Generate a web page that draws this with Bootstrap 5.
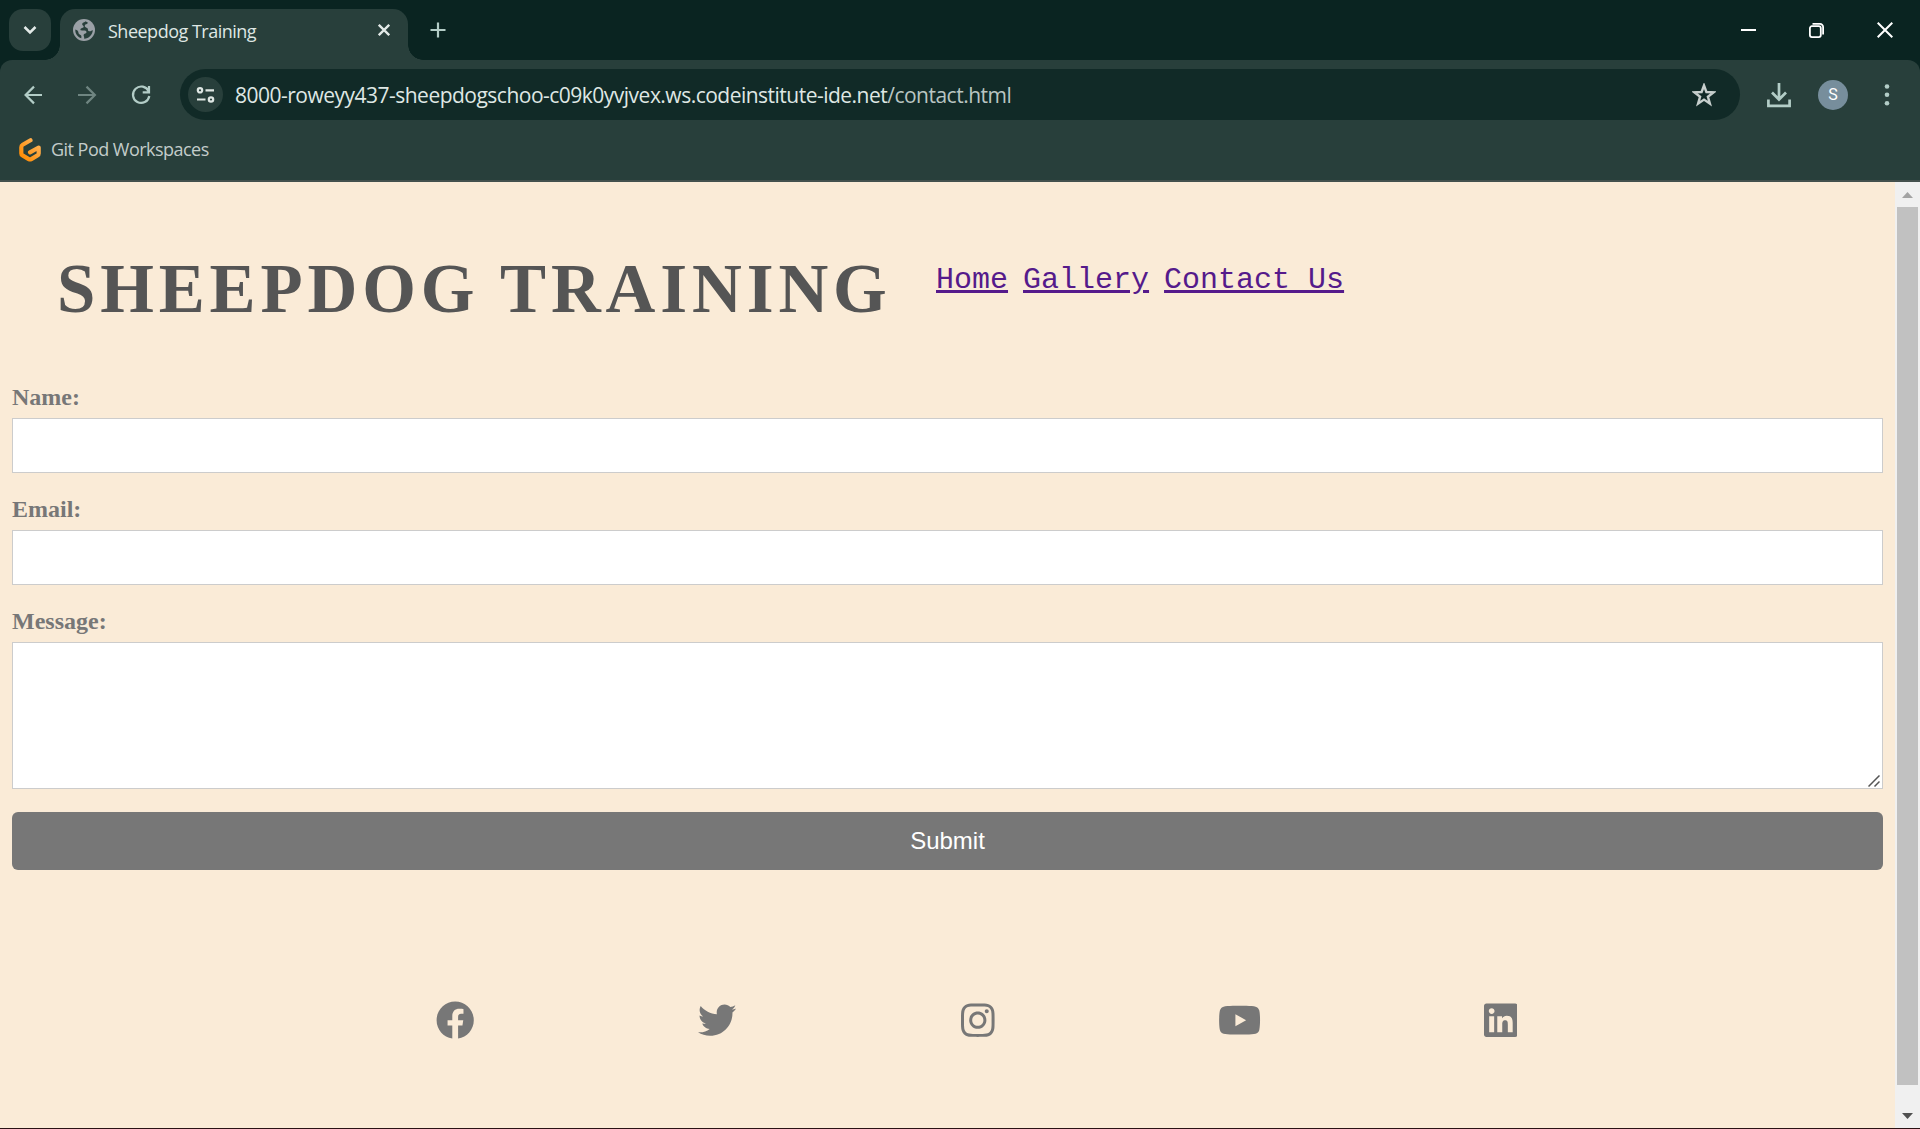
<!DOCTYPE html>
<html lang="en">
<head>
<meta charset="utf-8">
<meta name="viewport" content="width=device-width, initial-scale=1">
<title>Sheepdog Training</title>
<link href="https://cdn.jsdelivr.net/npm/bootstrap@5.3.0/dist/css/bootstrap.min.css" rel="stylesheet">
<style>
  body { height: 1129px; overflow: hidden; background: #faebd7; font-family: "Open Sans", "Noto Sans", sans-serif; }
  svg { display: block; flex: none; }
  .tabstrip { height: 60px; background: #0a2421; padding: 9px 27px 0 9px; }
  .tab-search { width: 42px; height: 42px; border-radius: 14px; background: #283f3b; }
  .browser-tab { position: relative; width: 348px; height: 51px; margin-left: 9px; padding: 0 18px 9px 13px; border-radius: 15px 15px 0 0; background: #283f3b; color: #dfe7e4; font-size: 18px; }
  .browser-tab::before, .browser-tab::after { content: ""; position: absolute; bottom: 0; width: 15px; height: 15px; }
  .browser-tab::before { left: -15px; background: radial-gradient(circle at 0 0, transparent 14.5px, #283f3b 15px); }
  .browser-tab::after { right: -15px; background: radial-gradient(circle at 100% 0, transparent 14.5px, #283f3b 15px); }
  .tab-title { margin-left: 13px; padding-top: 2px; line-height: 40px; letter-spacing: -.5px; white-space: nowrap; }
  .strip-icon { height: 42px; }
  .new-tab { margin-left: 22px; }
  .window-controls { gap: 53px; }
  .toolbar-wrap { background: #0a2421; }
  .toolbar { height: 122px; background: #283f3b; border-radius: 12px 12px 0 0; }
  .nav-row { padding: 9px 22px 0 22px; height: 60px; }
  .omnibox { width: 1560px; height: 51px; margin-left: 27px; padding: 0 24px 0 8px; border-radius: 26px; background: #112a27; color: #dfe7e4; font-size: 21px; }
  .site-info { width: 35px; height: 35px; background: #283f3b; }
  .url-text { margin-left: 12px; white-space: nowrap; letter-spacing: -.51px; line-height: 30px; }
  .url-path { color: #b9c5c2; }
  .downloads, .avatar { margin-left: 27px; }
  .kebab { margin-left: 36px; }
  .avatar { width: 30px; height: 30px; background: #778e9c; color: #fff; font: 16px/30px Roboto, sans-serif; }
  .bookmarks { height: 62px; padding: 0 0 0 19px; border-bottom: 2px solid #43504d; color: #c3ccca; font-size: 18px; }
  .bookmarks span { letter-spacing: -.53px; margin: 0 0 1px 10px; }
  .viewport { height: 946px; }
  .site-head { height: 193px; padding-left: 57px; }
  .site-title { margin: 63px 0 0; width: 879px; color: #555; font: 700 69px/88px "Liberation Serif", serif; letter-spacing: 4.85px; white-space: nowrap; }
  .site-nav { gap: 15px; margin-top: 80px; font: 30px/36px "Liberation Mono", monospace; }
  .site-nav a { color: #551a8b; text-decoration: underline 3px; white-space: nowrap; text-underline-offset: 2px; }
  .contact-form { padding: 0 12px; }
  .contact-form .form-label { display: block; height: 43px; margin: 0; padding-top: 9px; font: 700 24px/27px "Liberation Serif", serif; color: #777; }
  .contact-form .form-control { border: 1px solid #ccc; border-radius: 0; background: #fff; resize: none; }
  .contact-form input.form-control { height: 55px; margin-bottom: 14px; }
  .contact-form textarea.form-control { height: 147px; }
  .grip { position: absolute; right: 3px; bottom: 2px; }
  .submit-btn, .submit-btn:hover { height: 58px; margin-top: 23px; border: 0; border-radius: 6px; background: #777; color: #fff; font: 24px/56px "Liberation Sans", sans-serif; padding: 0; }
  .social { width: 1306px; margin: 131px 0 0 325px; }
  .social svg { height: 38.4px; fill: #777; }
  .scroll-track { width: 25px; background: #f0f0f0; }
  .scroll-thumb { width: 21px; height: 878px; background: #c1c1c1; margin-left: 2px; }
  .bottom-edge { height: 1px; background: #2a1214; }
</style>
</head>
<body class="d-flex flex-column">
<header>
  <div class="tabstrip d-flex align-items-start">
    <div class="tab-search d-flex align-items-center justify-content-center">
      <svg width="14" height="10" viewBox="0 0 14 10" fill="none" stroke="#e3eae8" stroke-width="2.5"><path d="M1.5 2 7 7.5 12.500 2"/></svg>
    </div>
    <div class="browser-tab d-flex align-items-center">
      <svg width="22" height="22" viewBox="0 0 22 22"><circle cx="11" cy="11" r="11" fill="#9aa0a6"/><path d="M12.500 2.200c-.8 1.500-3.300 1-3.300 3 0 1.300 1.500 1.300 1.500 2.500 0 1.500-3 1-3.300 2.700-.1 1.300 2.300.8 4.100 1 2 .2 2.400 1.700 1.600 2.700-.8.900-2.300.5-2.500 2-.1 1.200.8 1.800.6 3.600 4.600-.1 8.500-4 8.600-8.700-1.200.5-2.100 1.700-3.700 1.200-1.800-.6-.5-2.600-2.100-3.300-1.300-.6-2.500-1.100-2.200-2.500.3-1.500 2.400-.9 3.200-2.600-.8-.7-1.600-1.200-2.500-1.600zM2.300 10.500c-.3 4 2.300 7.700 6 8.800.2-1.600.3-2.300-.4-3.100-.9-1-2.500-1.200-2.500-2.800 0-1.500-1.300-2.400-3.100-2.900z" fill="#283f3b"/></svg>
      <span class="tab-title">Sheepdog Training</span>
      <svg class="ms-auto" width="12" height="12" viewBox="0 0 12 12" stroke="#e3eae8" stroke-width="2.300"><path d="m.8.8 10.400 10.400M11.200.8.8 11.200"/></svg>
    </div>
    <div class="strip-icon new-tab d-flex align-items-center"><svg width="16" height="16" viewBox="0 0 16 16" stroke="#b3cdc7" stroke-width="2.200"><path d="M8 .5v15M.5 8h15"/></svg></div>
    <div class="strip-icon window-controls d-flex align-items-center ms-auto">
      <svg width="15" height="15" viewBox="0 0 15 15"><path d="M0 6h15v2H0z" fill="#fff"/></svg>
      <svg width="15" height="15" viewBox="0 0 15 15" fill="none" stroke="#fff" stroke-width="1.800"><rect x=".9" y="3.200" width="10.900" height="10.900" rx="2"/><path d="M3.500.9H11a3.100 3.100 0 0 1 3.100 3.100v7.500"/></svg>
      <svg width="16" height="16" viewBox="0 0 16 16" stroke="#fff" stroke-width="2"><path d="m.7.700 14.600 14.600M15.300.700.700 15.300"/></svg>
    </div>
  </div>
  <div class="toolbar-wrap">
    <div class="toolbar">
      <div class="nav-row d-flex align-items-center">
        <svg width="131" height="24" viewBox="0 0 131 24" fill="none" stroke-width="2.200">
          <path d="M20 12H4M12 3.600 3.600 12 12 20.400" stroke="#b3cdc7"/>
          <path d="M56 12h16M64.500 3.600 72.900 12l-8.400 8.400" stroke="#6f8581"/>
          <path d="M126.700 8.400A8.200 8.200 0 1 0 127.300 13M127 3v6.300h-6.300" stroke="#b3cdc7"/>
        </svg>
        <div class="omnibox d-flex align-items-center">
          <span class="site-info rounded-circle d-flex align-items-center justify-content-center">
            <svg width="19" height="16" viewBox="0 0 19 16" fill="none" stroke="#dfe7e4" stroke-width="2.200"><circle cx="4" cy="3.300" r="2.200"/><path d="M9.500 3.300H18M1 12.500h8.500"/><circle cx="15" cy="12.500" r="2.200"/></svg>
          </span>
          <span class="url-text">8000-roweyy437-sheepdogschoo-c09k0yvjvex.ws.codeinstitute-ide.net<span class="url-path">/contact.html</span></span>
          <svg class="ms-auto" width="24" height="24" viewBox="0 0 24 24" fill="none" stroke="#c7cfcd" stroke-width="2.400"><path d="m12 2.500 2.400 6.500 7.300.3-5.800 4.400 2 7-5.900-4.100-5.900 4.100 2-7-5.800-4.400 7.300-.3z"/></svg>
        </div>
        <svg class="downloads" width="24" height="26" viewBox="0 0 24 26" fill="none" stroke="#b3cdc7" stroke-width="2.700"><path d="M12 1v16M5 10.500l7 7 7-7M1.400 17.500v6.300h21.200v-6.300"/></svg>
        <div class="avatar rounded-circle text-center">S</div>
        <svg class="kebab" width="6" height="22" viewBox="0 0 6 22" fill="#b3cdc7"><circle cx="3" cy="2.500" r="2.300"/><circle cx="3" cy="10.800" r="2.300"/><circle cx="3" cy="19.200" r="2.300"/></svg>
      </div>
      <div class="bookmarks d-flex align-items-center">
        <svg width="22" height="24" viewBox="0 0 22 24" fill="none"><defs><linearGradient id="gp" x1="1" y1="0" x2="0" y2="1"><stop stop-color="#ffb45b"/><stop offset="1" stop-color="#ff8a00"/></linearGradient></defs><path d="M11.500 2.300 3.700 6.800Q2.300 7.600 2.300 9.200v6.200q0 1.300 1.200 2l6.200 3.700q1.300.7 2.600 0l6.200-3.700q1.200-.7 1.200-2V9.500L11 14.300" stroke="url(#gp)" stroke-width="4.200" stroke-linecap="round" stroke-linejoin="round"/></svg>
        <span>Git Pod Workspaces</span>
      </div>
    </div>
  </div>
</header>
<main class="viewport d-flex">
  <div class="flex-grow-1">
    <div class="site-head d-flex align-items-start">
      <h1 class="site-title">SHEEPDOG TRAINING</h1>
      <nav class="site-nav d-flex"><a href="#">Home</a><a href="#">Gallery</a><a href="#">Contact Us</a></nav>
    </div>
    <form class="contact-form">
      <label class="form-label" for="name">Name:</label>
      <input class="form-control" id="name" type="text">
      <label class="form-label" for="email">Email:</label>
      <input class="form-control" id="email" type="email">
      <label class="form-label" for="message">Message:</label>
      <div class="position-relative">
        <textarea class="form-control" id="message"></textarea>
        <svg class="grip" width="12" height="12" viewBox="0 0 12 12" stroke="#555" stroke-width="1.500"><path d="M.5 11.500 11.500.500M6.500 11.500l5-5"/></svg>
      </div>
      <button class="btn submit-btn w-100 d-block" type="button">Submit</button>
    </form>
    <div class="social row g-0 row-cols-5">
      <div class="col d-flex justify-content-center"><svg viewBox="0 0 512 512"><path d="M504 256C504 119 393 8 256 8S8 119 8 256c0 123.780 90.690 226.380 209.250 245V327.690h-63V256h63v-54.640c0-62.150 37-96.480 93.670-96.480 27.140 0 55.520 4.840 55.520 4.840v61h-31.280c-30.800 0-40.410 19.120-40.410 38.730V256h68.780l-11 71.690h-57.780V501C413.310 482.380 504 379.780 504 256z"/></svg></div>
      <div class="col d-flex justify-content-center"><svg viewBox="0 0 512 512"><path d="M459.370 151.716c.325 4.548.325 9.097.325 13.645 0 138.720-105.583 298.558-298.558 298.558-59.452 0-114.680-17.219-161.137-47.106 8.447.974 16.568 1.299 25.340 1.299 49.055 0 94.213-16.568 130.274-44.832-46.132-.975-84.792-31.188-98.112-72.772 6.498.974 12.995 1.624 19.818 1.624 9.421 0 18.843-1.300 27.614-3.573-48.081-9.747-84.143-51.980-84.143-102.985v-1.299c13.969 7.797 30.214 12.670 47.431 13.319-28.264-18.843-46.781-51.005-46.781-87.391 0-19.492 5.197-37.360 14.294-52.954 51.655 63.675 129.300 105.258 216.365 109.807-1.624-7.797-2.599-15.918-2.599-24.040 0-57.828 46.782-104.934 104.934-104.934 30.213 0 57.502 12.670 76.670 33.137 23.715-4.548 46.456-13.320 66.599-25.340-7.798 24.366-24.366 44.833-46.132 57.827 21.117-2.273 41.584-8.122 60.426-16.243-14.292 20.791-32.161 39.308-52.628 54.253z"/></svg></div>
      <div class="col d-flex justify-content-center"><svg viewBox="0 0 448 512"><path d="M224.100 141c-63.600 0-114.900 51.300-114.900 114.900s51.300 114.900 114.900 114.900S339 319.500 339 255.900 287.700 141 224.100 141zm0 189.600c-41.100 0-74.700-33.500-74.700-74.700s33.500-74.700 74.700-74.700 74.700 33.500 74.700 74.700-33.600 74.700-74.700 74.700zm146.400-194.300c0 14.900-12 26.800-26.800 26.800-14.900 0-26.800-12-26.800-26.800s12-26.800 26.800-26.800 26.800 12 26.800 26.800zm76.100 27.200c-1.700-35.900-9.900-67.700-36.200-93.900-26.200-26.200-58-34.400-93.900-36.200-37-2.100-147.900-2.100-184.900 0-35.800 1.700-67.600 9.900-93.900 36.100s-34.400 58-36.200 93.900c-2.100 37-2.100 147.900 0 184.900 1.700 35.900 9.900 67.700 36.200 93.900s58 34.400 93.900 36.200c37 2.100 147.900 2.100 184.900 0 35.900-1.700 67.700-9.900 93.900-36.200 26.200-26.200 34.400-58 36.200-93.900 2.100-37 2.100-147.800 0-184.800zM398.800 388c-7.800 19.600-22.900 34.700-42.600 42.600-29.500 11.700-99.500 9-132.100 9s-102.700 2.600-132.100-9c-19.600-7.800-34.700-22.900-42.600-42.600-11.700-29.500-9-99.500-9-132.100s-2.600-102.700 9-132.100c7.800-19.600 22.900-34.700 42.600-42.600 29.500-11.700 99.500-9 132.100-9s102.700-2.600 132.100 9c19.600 7.800 34.700 22.900 42.600 42.600 11.700 29.500 9 99.500 9 132.100s2.700 102.700-9 132.100z"/></svg></div>
      <div class="col d-flex justify-content-center"><svg viewBox="0 0 576 512"><path d="M549.655 124.083c-6.281-23.650-24.787-42.276-48.284-48.597C458.781 64 288 64 288 64S117.220 64 74.629 75.486c-23.497 6.322-42.003 24.947-48.284 48.597-11.412 42.867-11.412 132.305-11.412 132.305s0 89.438 11.412 132.305c6.281 23.650 24.787 41.500 48.284 47.821C117.220 448 288 448 288 448s170.780 0 213.371-11.486c23.497-6.321 42.003-24.171 48.284-47.821 11.412-42.867 11.412-132.305 11.412-132.305s0-89.438-11.412-132.305zm-317.510 213.508V175.185l142.739 81.205-142.739 81.201z"/></svg></div>
      <div class="col d-flex justify-content-center"><svg viewBox="0 0 448 512"><path d="M416 32H31.900C14.300 32 0 46.500 0 64.300v383.400C0 465.500 14.300 480 31.900 480H416c17.600 0 32-14.500 32-32.300V64.300c0-17.800-14.400-32.300-32-32.300zM135.400 416H69V202.200h66.500V416zm-33.200-243c-21.300 0-38.500-17.300-38.500-38.500S80.900 96 102.200 96c21.200 0 38.500 17.300 38.500 38.500 0 21.300-17.200 38.500-38.500 38.500zm282.100 243h-66.400V312c0-24.800-.5-56.700-34.500-56.700-34.600 0-39.900 27-39.900 54.900V416h-66.400V202.200h63.700v29.200h.9c8.900-16.800 30.600-34.500 62.200-34.500 66.500 0 78.800 43.800 78.800 100.900V416z"/></svg></div>
    </div>
  </div>
  <div class="scroll-track d-flex flex-column flex-shrink-0">
    <svg width="25" height="25" viewBox="0 0 25 25"><path d="M7 16h11l-5.500-6z" fill="#a3a3a3"/></svg>
    <div class="scroll-thumb"></div>
    <svg class="mt-auto" width="25" height="25" viewBox="0 0 25 25"><path d="M7 10h11l-5.500 6z" fill="#505050"/></svg>
  </div>
</main>
<div class="bottom-edge"></div>
<script src="https://cdn.jsdelivr.net/npm/bootstrap@5.3.0/dist/js/bootstrap.bundle.min.js"></script>
</body>
</html>
